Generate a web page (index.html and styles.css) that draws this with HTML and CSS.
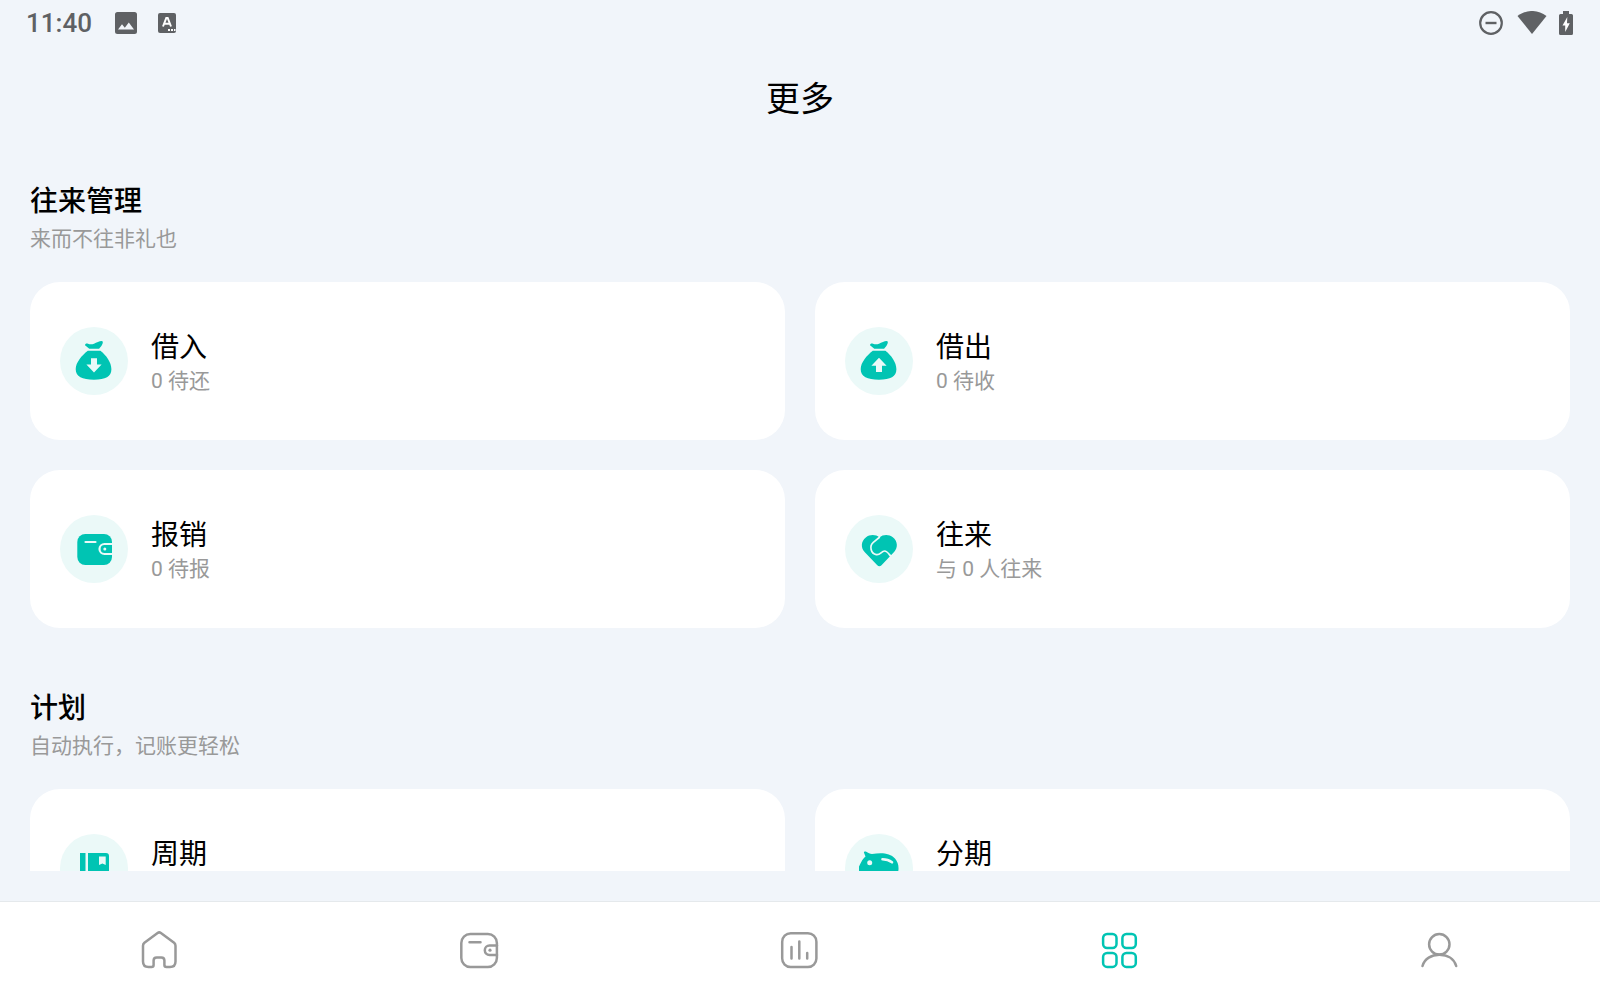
FILE: index.html
```html
<!DOCTYPE html>
<html lang="zh-CN">
<head>
<meta charset="utf-8">
<meta name="viewport" content="width=device-width, initial-scale=1">
<title>更多</title>
<link rel="stylesheet" href="styles.css">
</head>
<body>
<div class="status">
  <span class="clock">11:40</span>
  <svg class="status-photo" width="22" height="22" viewBox="0 0 22 22"><path fill="currentColor" fill-rule="evenodd" d="M2.500 0h17A2.500 2.500 0 0 1 22 2.500v17a2.500 2.500 0 0 1-2.500 2.500h-17A2.500 2.500 0 0 1 0 19.500v-17A2.500 2.500 0 0 1 2.500 0zM3 17.500h16l-5.200-7-4 5.200-2.800-3.400z"/></svg>
  <svg class="status-lang" width="18" height="20" viewBox="0 0 18 20"><rect width="18" height="20" rx="2" fill="currentColor"/><path d="M5 13.500 8.300 5h1.400l3.300 8.500M6.300 10.800h5.400" fill="none" stroke="#fff" stroke-width="2"/><path d="M10 17h2m1 0h2m1 0h1.500" stroke="#fff" stroke-width="1.800"/></svg>
  <span class="spacer"></span>
  <svg width="24" height="24" viewBox="0 0 24 24"><circle cx="12" cy="12" r="10.800" fill="none" stroke="currentColor" stroke-width="2.200"/><path d="M6.500 12h11" stroke="currentColor" stroke-width="2.400"/></svg>
  <svg class="status-wifi" width="30" height="24" viewBox="0 0 30 24"><path fill="currentColor" d="M.5 5C9-1.700 21-1.700 29.500 5L15 23z"/></svg>
  <svg class="status-battery" width="14" height="24" viewBox="0 0 14 24"><path fill="currentColor" d="M4 0h6v3h2.500A1.500 1.500 0 0 1 14 4.500v18a1.500 1.500 0 0 1-1.500 1.500h-11A1.500 1.500 0 0 1 0 22.500v-18A1.500 1.500 0 0 1 1.500 3H4z"/><path fill="#fff" d="M8.300 6 3.500 14.500H6.200V21l4.600-8.800H8z"/></svg>
</div>

<header class="title-bar"><h1>更多</h1></header>

<main class="content">
  <section>
    <h2>往来管理</h2>
    <p class="lead">来而不往非礼也</p>
    <div class="cards">
      <a class="card" href="#borrow">
        <svg class="badge" viewBox="0 0 68 68"><path fill="currentColor" d="M25 18.200c0-1.500 1.500-2 3-1.500 2 .8 4 .8 6 0 2.500-1.200 5.500-2.700 7.500-2.700 1.500 0 1.600 1.200 1 2.800-.8 2-2 3.600-3.400 4.900H29.300zM27.800 23.800h12.600c6 4.700 11 11.700 11 18.400 0 7.200-5.800 10.500-17.500 10.500s-18.200-3.300-18.200-10.500c0-6.700 6.100-13.700 12.100-18.400z"/><path fill="#ebf9f8" d="M31 31.300h6v6.300h4.600L34 45.600l-7.600-8H31z"/></svg>
        <span class="card-text"><span class="card-title">借入</span><span class="card-note">0 待还</span></span>
      </a>
      <a class="card" href="#lend">
        <svg class="badge" viewBox="0 0 68 68"><path fill="currentColor" d="M25 18.200c0-1.500 1.500-2 3-1.500 2 .8 4 .8 6 0 2.500-1.200 5.500-2.700 7.500-2.700 1.500 0 1.600 1.200 1 2.800-.8 2-2 3.600-3.400 4.900H29.300zM27.800 23.800h12.600c6 4.700 11 11.700 11 18.400 0 7.200-5.800 10.500-17.500 10.500s-18.200-3.300-18.200-10.500c0-6.700 6.100-13.700 12.100-18.400z"/><path fill="#ebf9f8" d="M31 45h6v-6.300h4.600L34 30.700l-7.600 8H31z"/></svg>
        <span class="card-text"><span class="card-title">借出</span><span class="card-note">0 待收</span></span>
      </a>
      <a class="card" href="#expense">
        <svg class="badge" viewBox="0 0 68 68"><rect x="17.300" y="19" width="34.700" height="31" rx="8" fill="currentColor"/><path d="M25.500 27H35.500" stroke="#ebf9f8" stroke-width="2.200" stroke-linecap="round"/><path d="M52 29H44.500a5 5 0 0 0 0 10H52" fill="none" stroke="#ebf9f8" stroke-width="2.200"/><circle cx="44.800" cy="34" r="1.500" fill="#ebf9f8"/></svg>
        <span class="card-text"><span class="card-title">报销</span><span class="card-note">0 待报</span></span>
      </a>
      <a class="card" href="#contacts">
        <svg class="badge" viewBox="0 0 68 68"><path fill="currentColor" d="M34.400 22.500C38 19.300 44 19.200 47.800 22.300c5 4 5.300 10.200 1.500 14.400L36.500 50.300c-1.300 1.400-2.900 1.400-4.200 0L19.600 37c-4-4.300-3.600-10.700 1.200-14.500 4-3.200 9.900-3.200 13.600 0z"/><path d="M34.800 22 28.300 27.300C24 31 25.800 38.500 31.300 39.600c4 .8 5-3.600 8.300-3.600 2.700 0 4.400 3.500 6.900 6" fill="none" stroke="#ebf9f8" stroke-width="1.700"/></svg>
        <span class="card-text"><span class="card-title">往来</span><span class="card-note">与 0 人往来</span></span>
      </a>
    </div>
  </section>

  <section>
    <h2>计划</h2>
    <p class="lead">自动执行，记账更轻松</p>
    <div class="cards">
      <a class="card" href="#recurring">
        <svg class="badge" viewBox="0 0 68 68"><path fill="currentColor" d="M20 19h5.500v31H20zM28 19h18a3 3 0 0 1 3 3v25a3 3 0 0 1-3 3H28z"/><path fill="#ebf9f8" d="M39 22.500h6.700v8.500l-3.300-1.500L39 31z"/></svg>
        <span class="card-text"><span class="card-title">周期</span></span>
      </a>
      <a class="card" href="#installment">
        <svg class="badge" viewBox="0 0 68 68"><path fill="currentColor" d="M19 18.800c-.4-1.200 1-1.500 2.300-1 1.700.9 3.700 2 5.700 2.300C36 18.300 45 18.800 50 24.500c4.500 5 4.600 13 1 18L48 50h-6l-1-4H29l-1 4h-6l-2-7-6-3v-7.500c1.500-2.500 2.800-7 6.500-10z"/><circle cx="24.700" cy="28.700" r="2.500" fill="#ebf9f8"/><path d="M37.500 25.300c4 0 6.500.8 9.500 3" fill="none" stroke="#ebf9f8" stroke-width="2.600" stroke-linecap="round"/></svg>
        <span class="card-text"><span class="card-title">分期</span></span>
      </a>
    </div>
  </section>
</main>

<nav class="tabs">
  <a href="#home" aria-label="首页"><svg viewBox="0 0 40 40"><path d="M17.600 3 4.400 12.800Q3 14 3 15.800V31.500Q3 37 8.500 37H11.500Q13.600 37 13.600 35V30.500Q13.600 27.400 16.700 27.400H21.300Q24.400 27.400 24.400 30.500V35Q24.400 37 26.500 37H30Q35.500 37 35.500 31.500V15.800Q35.500 14 34.100 12.800L20.900 3Q19.200 1.800 17.600 3z"/></svg></a>
  <a href="#wallet" aria-label="钱包"><svg viewBox="0 0 40 40"><rect x="1.300" y="4" width="35.600" height="33" rx="9"/><path d="M9.500 12.200H20.500M37 15.500H29.500a4.700 4.700 0 0 0 0 9.400H37"/><circle class="dot" cx="30" cy="20.200" r="1.600"/></svg></a>
  <a href="#stats" aria-label="统计"><svg viewBox="0 0 40 40"><rect x="2.200" y="3.200" width="34.200" height="33.800" rx="8.500"/><path d="M11.500 17V28.500M19.300 11.500V28.500M27.200 23V28.500"/></svg></a>
  <a class="active" href="#more" aria-label="更多" aria-current="page"><svg viewBox="0 0 40 40"><rect x="3.100" y="4" width="13.400" height="14" rx="4"/><rect x="22.400" y="4" width="13.400" height="14" rx="4"/><rect x="3.100" y="22.900" width="13.400" height="14" rx="4"/><rect x="22.400" y="22.900" width="13.400" height="14" rx="4"/></svg></a>
  <a href="#me" aria-label="我的"><svg viewBox="0 0 40 40"><circle cx="19.300" cy="14.300" r="10.200"/><path d="M2.500 36C4.500 28.500 11.500 24.800 19.300 24.800S34 28.500 36.200 36"/></svg></a>
</nav>
</body>
</html>
```
FILE: styles.css
```css
* {
  box-sizing: border-box;
}

body {
  margin: 0;
  height: 100vh;
  display: flex;
  flex-direction: column;
  background: #f1f5fa;
  color: #000;
  font-family: Roboto, "Noto Sans CJK SC", sans-serif;
}

a {
  color: inherit;
  text-decoration: none;
}

.status {
  flex: none;
  display: flex;
  align-items: center;
  height: 46px;
  padding: 0 27px 0 26px;
  color: #5f6164;
}

.clock {
  font-size: 26px;
  line-height: 30px;
  font-weight: 500;
}

.status-photo {
  margin-left: 23px;
}

.status-lang {
  margin-left: 21px;
}

.spacer {
  flex: 1;
}

.status-wifi {
  margin-left: 14px;
}

.status-battery {
  margin-left: 12px;
}

.title-bar {
  flex: none;
  padding: 29px 30px 31px;
  text-align: center;
}

h1 {
  margin: 0;
  font-size: 34px;
  line-height: 48px;
  font-weight: 400;
}

.content {
  flex: 1;
  min-height: 0;
  margin-bottom: 30px;
  padding: 0 30px;
  overflow-y: auto;
  scrollbar-width: none;
}

section {
  padding: 30px 0 33px;
}

section + section {
  padding-top: 30px;
}

h2 {
  margin: 0;
  font-size: 28px;
  line-height: 36px;
  font-weight: 500;
}

.lead {
  margin: 4px 0 28px;
  font-size: 21px;
  line-height: 30px;
  color: #999;
}

.cards {
  display: grid;
  grid-template-columns: 1fr 1fr;
  gap: 30px;
}

.card {
  display: flex;
  align-items: center;
  gap: 23px;
  height: 158px;
  padding: 0 30px;
  border-radius: 30px;
  background: #fff;
}

.badge {
  width: 68px;
  height: 68px;
  border-radius: 50%;
  background: #ebf9f8;
  color: #00c4b3;
}

.card-text {
  display: flex;
  flex-direction: column;
  min-height: 70px;
  padding-top: 4px;
}

.card-title {
  font-size: 28px;
  line-height: 36px;
}

.card-note {
  font-size: 21px;
  line-height: 30px;
  color: #999;
}

.tabs {
  flex: none;
  display: grid;
  grid-template-columns: repeat(5, 1fr);
  border-top: 1px solid #e5e9ec;
  background: #fff;
  color: #999;
}

.tabs a {
  display: flex;
  justify-content: center;
  padding: 28px 0 30px;
}

.tabs svg {
  width: 40px;
  height: 40px;
  fill: none;
  stroke: currentColor;
  stroke-width: 2.5px;
  stroke-linecap: round;
  stroke-linejoin: round;
}

.tabs .dot {
  fill: currentColor;
  stroke: none;
}

.tabs .active {
  color: #00c4b3;
}
```
